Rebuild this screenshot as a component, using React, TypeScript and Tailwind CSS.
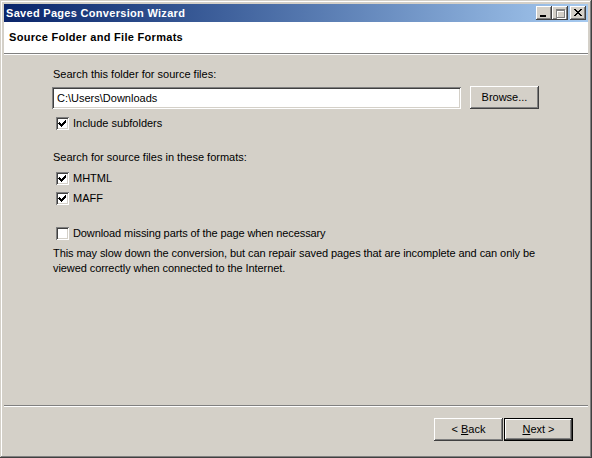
import React, { useState } from 'react';

const raised =
    'shadow-[inset_-1px_-1px_0_#404040,inset_1px_1px_0_#ffffff,inset_-2px_-2px_0_#808080,inset_2px_2px_0_#d4d0c8]';
const sunken =
    'shadow-[inset_1px_1px_0_#808080,inset_-1px_-1px_0_#ffffff,inset_2px_2px_0_#404040,inset_-2px_-2px_0_#d4d0c8]';

interface CheckProps {
    label: string;
    checked: boolean;
    onToggle: () => void;
    tight?: boolean;
}

const ClassicCheckbox: React.FC<CheckProps> = ({ label, checked, onToggle, tight }) => (
    <label className="flex h-[13px] cursor-default items-center pl-[4px] leading-[13px]" onClick={onToggle}>
        <span className={`relative h-[13px] w-[13px] shrink-0 bg-white ${sunken}`}>
            {checked && (
                <svg className="absolute inset-0" width="13" height="13" viewBox="0 0 13 13" shapeRendering="crispEdges">
                    <path d="M3 5h1v1h1v1h1v-1h1v-1h1v-1h1v-1h1v3h-1v1h-1v1h-1v1h-1v1h-1v-1h-1v-1h-1v-1h-1z" fill="#000" />
                </svg>
            )}
        </span>
        <span className={`ml-[4px] ${tight ? 'tracking-[-0.1px]' : ''}`}>{label}</span>
    </label>
);

const TitleButton: React.FC<{ children: React.ReactNode }> = ({ children }) => (
    <div className={`flex h-[14px] w-[16px] items-center justify-center bg-[#d4d0c8] ${raised}`}>{children}</div>
);

const WizardButton: React.FC<{ children: React.ReactNode; primary?: boolean }> = ({ children, primary }) =>
    primary ? (
        <div className="h-[23px] w-[69px] border border-black">
            <div className={`flex h-full w-full items-center justify-center bg-[#d4d0c8] ${raised}`}>{children}</div>
        </div>
    ) : (
        <div className={`flex h-[23px] w-[69px] items-center justify-center bg-[#d4d0c8] ${raised}`}>{children}</div>
    );

export default function App() {
    const [subfolders, setSubfolders] = useState(true);
    const [mhtml, setMhtml] = useState(true);
    const [maff, setMaff] = useState(true);
    const [download, setDownload] = useState(false);

    return (
        <div
            className="flex h-[458px] w-[592px] flex-col bg-[#d4d0c8] p-[4px] text-[11px] text-black shadow-[inset_-1px_-1px_0_#404040,inset_1px_1px_0_#d4d0c8,inset_-2px_-2px_0_#808080,inset_2px_2px_0_#ffffff]"
            style={{ fontFamily: '"Liberation Sans", Arial, sans-serif' }}
        >
            {/* title bar */}
            <div className="flex h-[18px] shrink-0 items-center bg-gradient-to-r from-[#0a246a] to-[#a6caf0] pl-[2px] pr-[2px]">
                <span className="flex-1 font-bold tracking-[0.3px] text-white">Saved Pages Conversion Wizard</span>
                <TitleButton>
                    <svg width="16" height="14" viewBox="0 0 16 14" shapeRendering="crispEdges">
                        <rect x="4" y="9" width="6" height="2" fill="#000" />
                    </svg>
                </TitleButton>
                <TitleButton>
                    <svg width="16" height="14" viewBox="0 0 16 14" shapeRendering="crispEdges">
                        <path d="M4 3h9v9h-9zM5 5v6h7v-6z" fill="#fff" transform="translate(1 1)" />
                        <path d="M4 3h9v9h-9zM5 5v6h7v-6z" fill="#808080" />
                    </svg>
                </TitleButton>
                <div className="ml-[2px]">
                    <TitleButton>
                        <svg width="16" height="14" viewBox="0 0 16 14" shapeRendering="crispEdges">
                            <path d="M4 3h2v1h1v1h2v-1h1v-1h2v1h-1v1h-1v1h-1v1h1v1h1v1h1v1h-2v-1h-1v-1h-2v1h-1v1h-2v-1h1v-1h1v-1h1v-1h-1v-1h-1v-1h-1z" fill="#000" />
                        </svg>
                    </TitleButton>
                </div>
            </div>

            {/* header */}
            <div className="flex h-[31px] shrink-0 items-center bg-white pl-[5px] font-bold tracking-[0.3px]">
                Source Folder and File Formats
            </div>
            <div className="h-[2px] shrink-0 border-t border-b border-t-[#808080] border-b-white" />

            {/* body */}
            <div className="flex flex-1 flex-col pl-[48px] pr-[49px]">
                <div className="mt-[13px] pl-[1px] leading-[13px]">Search this folder for source files:</div>
                <div className="mt-[5px] flex items-end">
                    <input
                        readOnly
                        value="C:\Users\Downloads"
                        className={`h-[22px] w-[409px] bg-white pl-[5px] outline-none ${sunken}`}
                    />
                    <div className="ml-[9px]">
                        <WizardButton>Browse...</WizardButton>
                    </div>
                </div>
                <div className="mt-[8px]">
                    <ClassicCheckbox label="Include subfolders" checked={subfolders} onToggle={() => setSubfolders(!subfolders)} />
                </div>

                <div className="mt-[21px] pl-[1px] leading-[13px]">Search for source files in these formats:</div>
                <div className="mt-[8px]">
                    <ClassicCheckbox label="MHTML" checked={mhtml} onToggle={() => setMhtml(!mhtml)} />
                </div>
                <div className="mt-[7px]">
                    <ClassicCheckbox label="MAFF" checked={maff} onToggle={() => setMaff(!maff)} />
                </div>

                <div className="mt-[22px]">
                    <ClassicCheckbox
                        label="Download missing parts of the page when necessary"
                        checked={download}
                        onToggle={() => setDownload(!download)}
                        tight
                    />
                </div>
                <p className="mt-[6px] pl-[1px] leading-[15px] tracking-[-0.08px]">
                    <span className="block whitespace-nowrap">
                        This may slow down the conversion, but can repair saved pages that are incomplete and can only be
                    </span>
                    <span className="block whitespace-nowrap">viewed correctly when connected to the Internet.</span>
                </p>
            </div>

            <div className="h-[2px] shrink-0 border-t border-b border-t-[#808080] border-b-white" />

            {/* footer */}
            <div className="flex h-[47px] shrink-0 items-start justify-end gap-[1px] pr-[15px] pt-[11px]">
                <WizardButton>
                    &lt; <span className="ml-[3px] underline">B</span>ack
                </WizardButton>
                <WizardButton primary>
                    <span className="underline">N</span>ext &gt;
                </WizardButton>
            </div>
        </div>
    );
}
